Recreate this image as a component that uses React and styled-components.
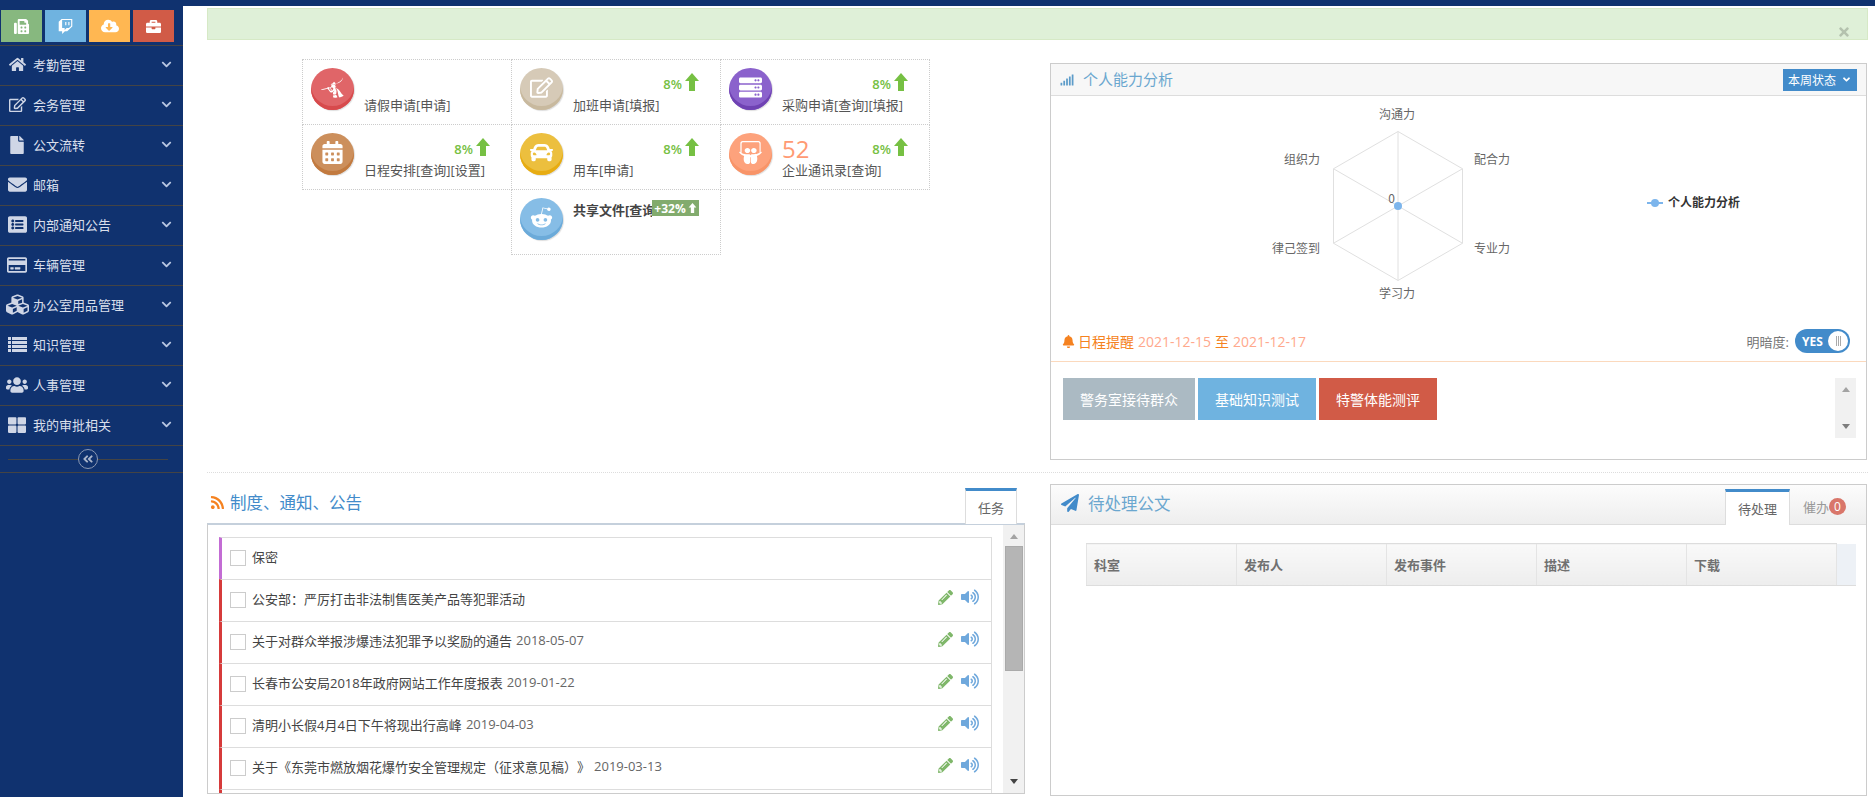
import React from 'react';
import styled, { createGlobalStyle } from 'styled-components';
import {
  FaAngleDoubleLeft, FaAngleDown, FaBell, FaBriefcase, FaCalendarAlt, FaCar,
  FaChevronDown, FaCloudDownloadAlt, FaCubes, FaEnvelope, FaFax, FaFile, FaHome, FaListAlt,
  FaPaperPlane, FaPencilAlt, FaPiedPiperAlt, FaRedditAlien, FaRegCreditCard, FaRegEdit, FaRss,
  FaServer, FaSignal, FaSlideshare, FaThLarge, FaTimes, FaTwitch, FaUsers, FaVolumeUp,
} from 'react-icons/fa';

const Global = createGlobalStyle`
  html, body { margin: 0; padding: 0; height: 797px; overflow: hidden; background: #fff; }
  body {
    font-family: "Open Sans", "Noto Sans CJK SC", sans-serif;
    font-size: 13px;
    color: #555;
    text-spacing-trim: space-all;
    font-feature-settings: "palt" 0;
  }
  * { box-sizing: border-box; }
`;

const Page = styled.div`
  display: flex;
  flex-direction: column;
  height: 797px;
  background: #10326f;
`;
const TopBar = styled.div`height: 6px; flex: none;`;
const Body = styled.div`display: flex; flex: 1; min-height: 0;`;

/* sidebar */
const Sidebar = styled.aside`
  width: 183px;
  flex: none;
  margin-top: 4px;
  color: #d9dfeb;
`;
const Shortcuts = styled.div`
  display: flex;
  gap: 3px;
  padding-left: 1px;
  height: 36px;
  border-bottom: 1px solid #444;
  align-items: flex-start;
`;
const Shortcut = styled.div`
  width: 41px;
  height: 32px;
  background: ${p => p.$bg};
  color: #fff;
  display: flex;
  align-items: center;
  justify-content: center;
  font-size: 15px;
`;
const MenuItem = styled.div`
  height: 40px;
  display: flex;
  align-items: center;
  border-bottom: 1px solid #444;
  font-size: 13px;
  padding-bottom: 2px;
`;
const MenuIcon = styled.span`
  width: 33px;
  flex: none;
  display: flex;
  justify-content: center;
  padding-left: 1px;
  font-size: ${p => p.$size || 16}px;
  color: #cfd6e6;
`;
const MenuText = styled.span`flex: 1;`;
const MenuArrow = styled.span`
  width: 22px;
  font-size: 11px;
  color: #b8c6e2;
  display: flex;
`;
const Collapse = styled.div`
  height: 27px;
  border-bottom: 1px solid #444;
  display: flex;
  align-items: center;
  justify-content: center;
  position: relative;
  &::before {
    content: "";
    position: absolute;
    left: 8px;
    right: 15px;
    top: 13px;
    height: 1px;
    background: #444;
  }
`;
const CollapseBtn = styled.span`
  position: relative;
  margin-right: 7px;
  width: 20px;
  height: 20px;
  border-radius: 50%;
  border: 1px solid #8c99b3;
  background: #10326f;
  color: #a9b4ca;
  display: flex;
  align-items: center;
  justify-content: center;
  font-size: 12px;
`;

/* main */
const Main = styled.main`
  flex: 1;
  min-width: 0;
  background: #fff;
  padding: 2px 7px 0 24px;
`;
const Alert = styled.div`
  height: 32px;
  background: #dff0d8;
  border: 1px solid #d6e9c6;
  position: relative;
`;
const AlertClose = styled.span`
  position: absolute;
  right: 16px;
  bottom: 0;
  color: #b4c2ae;
  font-size: 14px;
  display: flex;
`;
const TopRow = styled.div`
  display: grid;
  grid-template-columns: 843px 817px;
  margin-top: 19px;
  height: 414px;
  border-bottom: 1px dotted #ddd;
`;
const TileGrid = styled.div`
  margin-left: 95px;
  display: grid;
  grid-template-columns: repeat(3, 209px);
  grid-auto-rows: 65px;
  align-content: start;
`;
const Tile = styled.div`
  grid-column: ${p => p.$col || 'auto'};
  border: 1px dotted #ccc;
  margin: 0 -1px -1px 0;
  display: flex;
  padding: 8px 0 0 8px;
`;
const Bubble = styled.div`
  width: 43px;
  height: 42px;
  flex: none;
  border-radius: 50%;
  background: ${p => p.$bg};
  box-shadow: inset 0 -4px 0 ${p => p.$edge}, 1px 1px 1px #ddd;
  color: #fff;
  display: flex;
  align-items: center;
  justify-content: center;
  font-size: 23px;
  padding-bottom: 3px;
`;
const TileBody = styled.div`
  flex: 1;
  margin-left: 10px;
  padding-right: 21px;
  display: flex;
  flex-direction: column;
  position: relative;
  min-width: 0;
`;
const StatRow = styled.div`
  height: 28px;
  display: flex;
  align-items: center;
  justify-content: space-between;
`;
const Number = styled.span`
  font-size: 24px;
  line-height: 1;
  color: #ff9a73;
  margin-top: 4px;
`;
const Percent = styled.span`
  margin-left: auto;
  display: flex;
  align-items: center;
  gap: 3px;
  color: #76c043;
  font-weight: 600;
  font-size: 13px;
  margin-top: 4px;
  svg { margin-top: -5px; }
`;
const TileLabel = styled.div`
  font-size: 13px;
  line-height: 18px;
  color: #555;
  white-space: nowrap;
`;
const TileStrong = styled.div`
  font-size: 13px;
  font-weight: 700;
  line-height: 18px;
  color: #444;
  white-space: nowrap;
  overflow: hidden;
  margin: 3px 47px 0 0;
`;
const Tag = styled.span`
  position: absolute;
  top: 2px;
  right: 21px;
  width: 47px;
  height: 16px;
  background: #82ab6d;
  color: #fff;
  font-size: 12px;
  font-weight: 700;
  display: flex;
  align-items: center;
  justify-content: center;
  gap: 2px;
`;

const Panel = styled.section`
  border: 1px solid #ccc;
  background: #fff;
`;
const AbilityPanel = styled(Panel)`
  margin-top: 4px;
  height: 397px;
`;
const PanelHead = styled.div`
  height: 32px;
  background: #f7f7f7;
  border-bottom: 1px solid #ddd;
  display: flex;
  align-items: center;
  padding: 0 9px;
  color: #6ba7cf;
  font-size: 15px;
  span.title { margin-top: -2px; }
`;
const HeadIcon = styled.span`
  font-size: 14px;
  margin-right: 9px;
  display: flex;
  color: #5d9cc9;
`;
const HeadBtn = styled.button`
  margin-left: auto;
  height: 22px;
  width: 74px;
  border: 0;
  background: #428bca;
  color: #fff;
  font: inherit;
  font-size: 12px;
  padding: 0;
  display: flex;
  align-items: center;
  justify-content: center;
  gap: 5px;
  svg { font-size: 11px; }
`;
const Chart = styled.svg`
  display: block;
  width: 815px;
  height: 225px;
  font-family: "Noto Sans CJK SC", sans-serif;
`;
const Schedule = styled.div`
  height: 41px;
  border-bottom: 1px solid #fbd9bd;
  display: flex;
  align-items: center;
  padding: 0 16px 0 11px;
  font-size: 14px;
  color: #f58220;
`;
const ScheduleBell = styled.span`display: flex; font-size: 13px; margin-right: 3px;`;
const DateText = styled.span`color: #ffa88c; margin: 0 4px;`;
const SwitchLabel = styled.span`
  margin-left: auto;
  margin-right: 6px;
  font-size: 13px;
  color: #777;
`;
const Switch = styled.span`
  width: 55px;
  height: 24px;
  border-radius: 12px;
  background: #428bca;
  color: #fff;
  font-size: 12px;
  font-weight: 700;
  display: flex;
  align-items: center;
  padding-left: 7px;
  position: relative;
`;
const Knob = styled.span`
  position: absolute;
  right: 2px;
  top: 2px;
  width: 20px;
  height: 20px;
  border-radius: 50%;
  background: #fff;
  display: flex;
  align-items: center;
  justify-content: center;
  gap: 1px;
  i { width: 1px; height: 10px; background: #aaa; }
`;
const TaskArea = styled.div`
  display: flex;
  justify-content: space-between;
  padding: 16px 10px 0 12px;
`;
const TaskBtns = styled.div`display: flex; gap: 3px;`;
const TaskBtn = styled.div`
  width: ${p => p.$w}px;
  height: 42px;
  background: ${p => p.$bg};
  color: #fff;
  font-size: 14px;
  display: flex;
  align-items: center;
  justify-content: center;
`;
const ScrollBar = styled.div`
  width: ${p => p.$w || 21}px;
  height: ${p => p.$h ? `${p.$h}px` : 'auto'};
  flex: none;
  background: #f1f1f1;
  display: flex;
  flex-direction: column;
  align-items: center;
  justify-content: space-between;
  padding: 9px 0 9px;
  position: relative;
`;
const ArrowUp = styled.i`
  width: 0; height: 0;
  border: 4px solid transparent;
  border-top: 0;
  border-bottom: 5px solid ${p => p.$c || '#a3a3a3'};
`;
const ArrowDown = styled.i`
  width: 0; height: 0;
  border: 4px solid transparent;
  border-bottom: 0;
  border-top: 5px solid ${p => p.$c || '#7d7d7d'};
`;
const Thumb = styled.div`
  position: absolute;
  left: 2px;
  right: 1px;
  top: 21px;
  height: 125px;
  background: #b5b5b5;
  border: 1px solid #aaa;
`;

const BottomRow = styled.div`
  display: grid;
  grid-template-columns: 843px 817px;
  padding-top: 11px;
`;
const LeftCol = styled.div`width: 818px;`;
const NoticeHead = styled.div`
  height: 39px;
  display: flex;
  align-items: flex-end;
  justify-content: space-between;
  padding: 0 8px 0 3px;
`;
const NoticeTitle = styled.div`
  display: flex;
  align-items: center;
  gap: 5px;
  font-size: 16.5px;
  color: #428bca;
  padding-bottom: 9px;
  svg { color: #f58220; font-size: 15px; }
`;
const Tab = styled.div`
  width: ${p => p.$w}px;
  height: 36px;
  background: ${p => p.$active ? '#fff' : 'transparent'};
  border-top: ${p => p.$active ? '3px solid #428bca' : '0'};
  border-left: ${p => p.$active ? '1px solid #ddd' : '0'};
  border-right: ${p => p.$active ? '1px solid #ddd' : '0'};
  color: ${p => p.$active ? '#666' : '#999'};
  font-size: 13px;
  display: flex;
  align-items: center;
  justify-content: ${p => p.$active ? 'center' : 'flex-start'};
  padding-left: ${p => p.$active ? 0 : 13}px;
  margin-bottom: ${p => p.$active ? -1 : 0}px;
  position: relative;
`;
const NoticeBox = styled.div`
  height: 271px;
  border: 1px solid #ccc;
  border-top: 2px solid #c5d0dc;
  display: flex;
`;
const NoticeList = styled.div`
  flex: 1;
  min-width: 0;
  overflow: hidden;
  padding: 12px 11px 0;
`;
const Item = styled.div`
  height: 43px;
  margin-bottom: -1px;
  border: 1px solid #ddd;
  border-left: 3px solid ${p => p.$mark};
  display: flex;
  align-items: center;
  padding: 0 12px 5px 8px;
  font-size: 13px;
  color: #444;
`;
const Check = styled.span`
  width: 16px;
  height: 16px;
  flex: none;
  border: 1px solid #ccc;
  margin: 4px 6px 0 0;
  background: #fff;
`;
const ItemDate = styled.span`color: #666; margin-left: 4px;`;
const ItemTools = styled.span`
  margin-left: auto;
  display: flex;
  align-items: center;
  gap: 8px;
  font-size: 15px;
  margin-top: -2px;
`;
const Pencil = styled(FaPencilAlt)`color: #7fb76a;`;
const Volume = styled(FaVolumeUp)`color: #6fa8dc; font-size: 18px;`;

const DocPanel = styled(Panel)`
  height: 312px;
`;
const DocHead = styled.div`
  height: 40px;
  background: linear-gradient(#fcfcfc, #eeeeee);
  border-bottom: 1px solid #ddd;
  display: flex;
  align-items: flex-end;
`;
const DocTitle = styled.div`
  display: flex;
  align-items: center;
  gap: 9px;
  align-self: center;
  flex: 1;
  padding: 0 0 3px 10px;
  font-size: 16.5px;
  color: #6ba7cf;
  svg { color: #428bca; font-size: 18px; }
`;
const Badge = styled.span`
  width: 17px;
  height: 17px;
  border-radius: 50%;
  background: #d9766a;
  color: #fff;
  font-size: 12px;
  display: flex;
  align-items: center;
  justify-content: center;
`;
const DocTable = styled.table`
  margin: 18px 0 0 35px;
  width: 769px;
  border-collapse: collapse;
  table-layout: fixed;
`;
const Th = styled.th`
  width: ${p => p.$w || 150}px;
  height: 42px;
  text-align: left;
  padding: 0 7px;
  background: ${p => p.$blank ? '#edf1f6' : 'linear-gradient(#f9f9f9, #ededed)'};
  border-top: ${p => p.$blank ? 0 : '1px solid #ddd'};
  border-bottom: 1px solid #ddd;
  border-left: 1px solid #e4e4e4;
  color: #707070;
  font-size: 13px;
  font-weight: 700;
`;

// font-awesome 4 style solid arrow, the package one is too thin
const ThickArrow = ({ w = 14, h = 18 }) => (
  <svg width={w} height={h} viewBox="0 0 14 18" fill="currentColor">
    <path d="M7 0 L14 8 L10 8 L10 18 L4 18 L4 8 L0 8 Z" />
  </svg>
);

// font-awesome 4 list, four rows
const ListRows = () => (
  <svg width="19" height="16" viewBox="0 0 19 16" fill="currentColor">
    {[0, 4, 8, 12].map(y => (
      <g key={y}>
        <rect x="0" y={y} width="3" height="3" />
        <rect x="4" y={y} width="15" height="3" />
      </g>
    ))}
  </svg>
);

const menu = [
  [FaHome, '考勤管理', 17],
  [FaRegEdit, '会务管理', 17],
  [FaFile, '公文流转', 18],
  [FaEnvelope, '邮箱', 19],
  [FaListAlt, '内部通知公告', 19],
  [FaRegCreditCard, '车辆管理', 20],
  [FaCubes, '办公室用品管理', 23],
  [ListRows, '知识管理', 19],
  [FaUsers, '人事管理', 22],
  [FaThLarge, '我的审批相关', 18],
];

const tiles = [
  { icon: FaPiedPiperAlt, bg: '#e06568', edge: '#d74a4c', label: '请假申请[申请]' },
  { icon: FaRegEdit, bg: '#d6cab7', edge: '#c8b99e', label: '加班申请[填报]', pct: true },
  { icon: FaServer, bg: '#8b62cc', edge: '#6f42b3', label: '采购申请[查询][填报]', pct: true },
  { icon: FaCalendarAlt, bg: '#cc8f5c', edge: '#c27a3f', label: '日程安排[查询][设置]', pct: true },
  { icon: FaCar, bg: '#ecbf3e', edge: '#e7ac12', label: '用车[申请]', pct: true },
  { icon: FaSlideshare, bg: '#fda27c', edge: '#f89468', label: '企业通讯录[查询]', pct: true, num: 52 },
];

const notices = [
  ['公安部：严厉打击非法制售医美产品等犯罪活动', ''],
  ['关于对群众举报涉爆违法犯罪予以奖励的通告', '2018-05-07'],
  ['长春市公安局2018年政府网站工作年度报表', '2019-01-22'],
  ['清明小长假4月4日下午将现出行高峰', '2019-04-03'],
  ['关于《东莞市燃放烟花爆竹安全管理规定（征求意见稿）》', '2019-03-13'],
];

const hex = [[0, -74.5], [64.5, -37.25], [64.5, 37.25], [0, 74.5], [-64.5, 37.25], [-64.5, -37.25]];
const cx = 347;
const cy = 110;

function Radar() {
  return (
    <Chart viewBox="0 0 815 225">
      <polygon
        points={hex.map(([x, y]) => `${cx + x},${cy + y}`).join(' ')}
        fill="none"
        stroke="#e0e0e0"
      />
      {hex.map(([x, y], i) => (
        <line key={i} x1={cx} y1={cy} x2={cx + x} y2={cy + y} stroke="#e0e0e0" />
      ))}
      <g fontSize="12" fill="#666">
        <text x="346" y="23" textAnchor="middle">沟通力</text>
        <text x="423" y="68">配合力</text>
        <text x="423" y="157">专业力</text>
        <text x="346" y="202" textAnchor="middle">学习力</text>
        <text x="269" y="157" textAnchor="end">律己签到</text>
        <text x="269" y="68" textAnchor="end">组织力</text>
        <text x="344" y="107" textAnchor="end">0</text>
      </g>
      <circle cx={cx} cy={cy} r="4" fill="#7cb5ec" />
      <line x1="596" y1="107" x2="612" y2="107" stroke="#7cb5ec" strokeWidth="2" />
      <circle cx="604" cy="107" r="4" fill="#7cb5ec" />
      <text x="617" y="111" fontSize="12" fontWeight="700" fill="#333">个人能力分析</text>
    </Chart>
  );
}

export default function App() {
  return (
    <Page>
      <Global />
      <TopBar />
      <Body>
        <Sidebar>
          <Shortcuts>
            <Shortcut $bg="#87b87f"><FaFax /></Shortcut>
            <Shortcut $bg="#6fb3e0"><FaTwitch /></Shortcut>
            <Shortcut $bg="#ffb752"><FaCloudDownloadAlt size={18} /></Shortcut>
            <Shortcut $bg="#d15b47"><FaBriefcase /></Shortcut>
          </Shortcuts>
          {menu.map(([Icon, text, size]) => (
            <MenuItem key={text}>
              <MenuIcon $size={size}><Icon /></MenuIcon>
              <MenuText>{text}</MenuText>
              <MenuArrow><FaChevronDown /></MenuArrow>
            </MenuItem>
          ))}
          <Collapse>
            <CollapseBtn><FaAngleDoubleLeft /></CollapseBtn>
          </Collapse>
        </Sidebar>

        <Main>
          <Alert><AlertClose><FaTimes /></AlertClose></Alert>

          <TopRow>
            <TileGrid>
              {tiles.map(t => (
                <Tile key={t.label}>
                  <Bubble $bg={t.bg} $edge={t.edge}><t.icon /></Bubble>
                  <TileBody>
                    <StatRow>
                      {t.num && <Number>{t.num}</Number>}
                      {t.pct && <Percent>8%<ThickArrow /></Percent>}
                    </StatRow>
                    <TileLabel>{t.label}</TileLabel>
                  </TileBody>
                </Tile>
              ))}
              <Tile $col="2">
                <Bubble $bg="#86bde6" $edge="#6baad9"><FaRedditAlien /></Bubble>
                <TileBody>
                  <TileStrong>共享文件[查询]</TileStrong>
                  <Tag>+32%<ThickArrow w={9} h={10} /></Tag>
                </TileBody>
              </Tile>
            </TileGrid>

            <AbilityPanel>
              <PanelHead>
                <HeadIcon><FaSignal /></HeadIcon>
                <span className="title">个人能力分析</span>
                <HeadBtn>本周状态<FaAngleDown /></HeadBtn>
              </PanelHead>
              <Radar />
              <Schedule>
                <ScheduleBell><FaBell /></ScheduleBell>
                日程提醒
                <DateText>2021-12-15</DateText>至<DateText>2021-12-17</DateText>
                <SwitchLabel>明暗度:</SwitchLabel>
                <Switch>YES<Knob><i /><i /><i /></Knob></Switch>
              </Schedule>
              <TaskArea>
                <TaskBtns>
                  <TaskBtn $w={132} $bg="#abbac3">警务室接待群众</TaskBtn>
                  <TaskBtn $w={118} $bg="#6fb3e0">基础知识测试</TaskBtn>
                  <TaskBtn $w={118} $bg="#d15b47">特警体能测评</TaskBtn>
                </TaskBtns>
                <ScrollBar $h={60}><ArrowUp /><ArrowDown /></ScrollBar>
              </TaskArea>
            </AbilityPanel>
          </TopRow>

          <BottomRow>
            <LeftCol>
              <NoticeHead>
                <NoticeTitle><FaRss />制度、通知、公告</NoticeTitle>
                <Tab $active $w={52}>任务</Tab>
              </NoticeHead>
              <NoticeBox>
                <NoticeList>
                  <Item $mark="#c36cd4"><Check />保密</Item>
                  {notices.map(([text, date]) => (
                    <Item key={text} $mark="#d63b3b">
                      <Check />
                      {text}
                      {date && <ItemDate>{date}</ItemDate>}
                      <ItemTools><Pencil /><Volume /></ItemTools>
                    </Item>
                  ))}
                  <Item $mark="#d63b3b" />
                </NoticeList>
                <ScrollBar>
                  <ArrowUp />
                  <Thumb />
                  <ArrowDown $c="#444" />
                </ScrollBar>
              </NoticeBox>
            </LeftCol>

            <DocPanel>
              <DocHead>
                <DocTitle><FaPaperPlane />待处理公文</DocTitle>
                <Tab $active $w={65}>待处理</Tab>
                <Tab $w={76}>催办<Badge>0</Badge></Tab>
              </DocHead>
              <DocTable>
                <thead>
                  <tr>
                    <Th>科室</Th>
                    <Th>发布人</Th>
                    <Th>发布事件</Th>
                    <Th>描述</Th>
                    <Th>下载</Th>
                    <Th $blank $w={19} />
                  </tr>
                </thead>
              </DocTable>
            </DocPanel>
          </BottomRow>
        </Main>
      </Body>
    </Page>
  );
}
